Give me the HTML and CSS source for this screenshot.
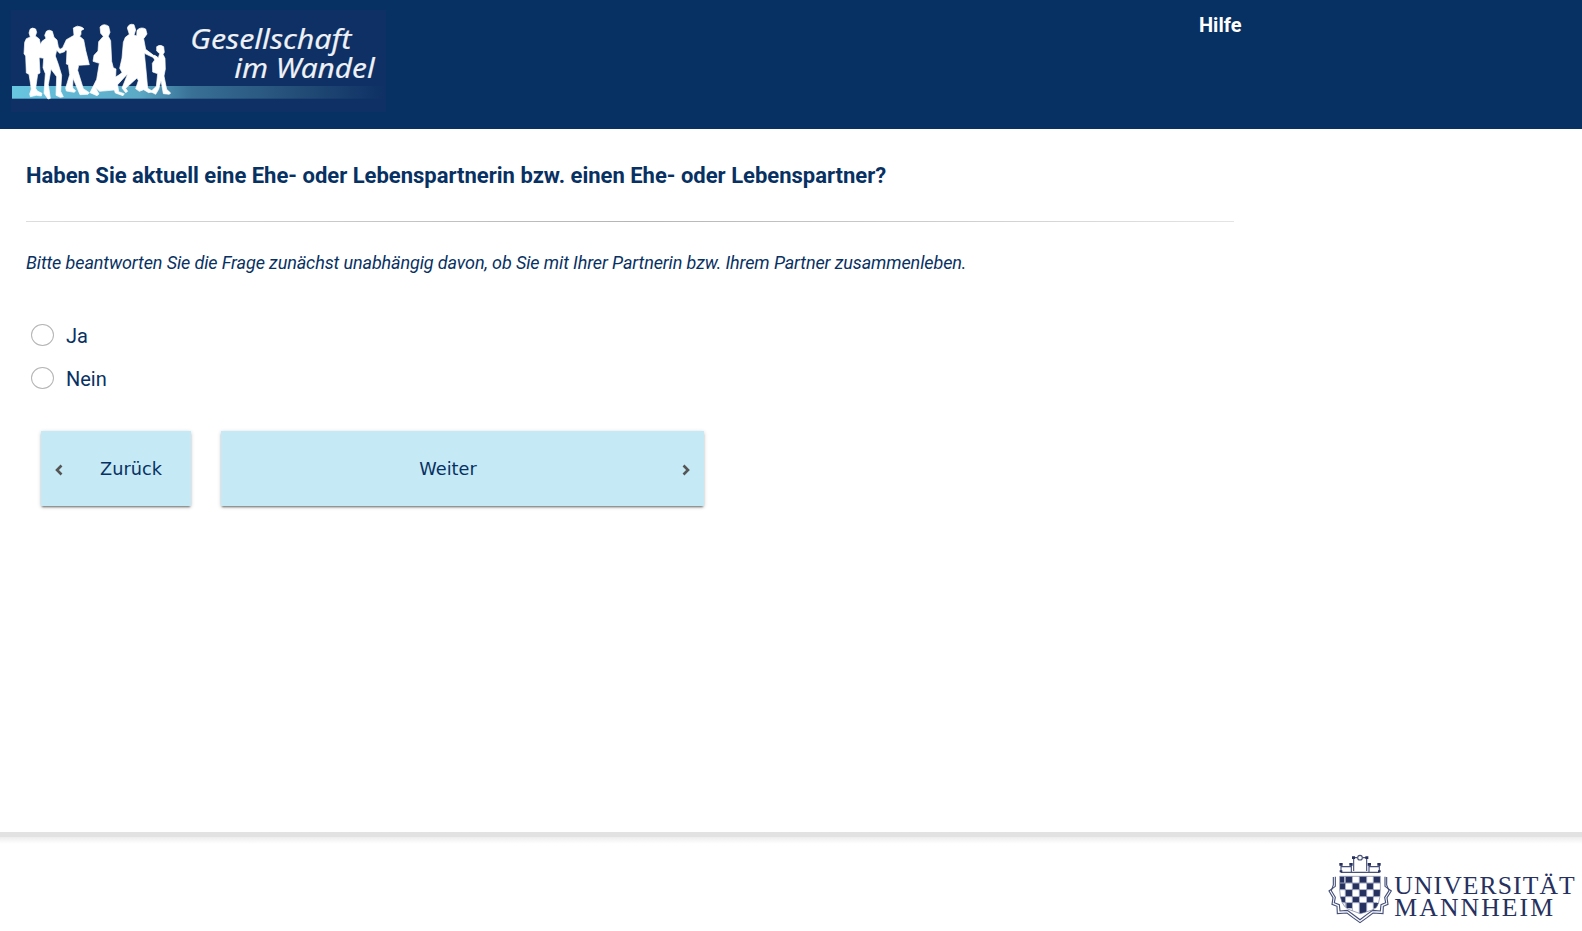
FILE: index.html
```html
<!DOCTYPE html>
<html lang="de">
<head>
<meta charset="utf-8">
<title>Gesellschaft im Wandel</title>
<link rel="stylesheet" href="styles.css">
</head>
<body>
<header class="header">
  <svg class="brand" viewBox="0 0 1200 387" role="img" aria-label="Gesellschaft im Wandel">
    <defs>
      <linearGradient id="band" x1="0" x2="1">
        <stop offset="0" stop-color="#68c6e0"/>
        <stop offset=".34" stop-color="#5ba9c5"/>
        <stop offset=".48" stop-color="#397096"/>
        <stop offset=".75" stop-color="#244f78"/>
        <stop offset="1" stop-color="#0e3064"/>
      </linearGradient>
    </defs>
    <rect x="33" y="30" width="1125" height="306" fill="#0e3064"/>
    <rect x="36" y="258" width="1122" height="38" fill="url(#band)"/>
    <g class="people">
      <path d="M90 88Q97 81 107 87L110 97L106 108L118 117L122 136L128 137L130 150L119 153L117 165L120 219L113 223L107 265L112 273L126 280L124 288L109 286L91 290L89 282L94 267L87 223L79 219L77 168L72 161L74 127L79 116L91 111L87 99Z"/>
      <path d="M139 94Q147 87 157 94L162 112L171 120L175 140L182 152L193 147L194 155L179 160L170 151L166 168L175 193L185 226L182 274L190 290L181 292L168 286L170 230L153 208L145 254L151 295L144 297L132 280L136 221L129 203L131 175L115 172L114 150L126 124L138 115L134 106Z"/>
      <path d="M220 84Q231 74 246 82L252 87L243 92L243 103L239 109L251 119L257 151L268 194L236 196L233 211L250 266L268 278L264 283L240 284L219 235L218 264L227 272L223 277L199 273L197 264L209 224L205 194L199 192L201 151L188 151L179 158L175 151L188 143L199 119L222 106Z"/>
      <path d="M300 81Q311 68 326 79L330 97L325 109L332 122L335 184L340 203L348 207L347 231L360 223L366 217L359 205L366 174L370 127L376 112L388 103L382 84Q387 69 402 74L407 90L402 105L410 108L411 91Q422 79 437 87L441 102L431 116L437 148L461 166L471 171L470 177L463 174L433 160L438 210L443 265L460 275L446 278L431 269L418 274L407 266L415 242L411 234L388 255L377 265L383 274L377 278L366 264L383 222L374 231L353 254L356 275L373 281L369 287L346 279L343 270L299 274L286 262L297 282L291 287L270 278L290 238L298 190L279 184L282 166L294 153L296 125L310 109L302 100Z"/>
      <path d="M470 140Q480 132 491 140L493 157L489 163L495 175L496 207L492 228L500 268L512 279L508 283L490 281L483 242L476 268L467 283L452 275L469 259L473 221L458 216L457 190L464 180L459 170L464 166L475 173L479 161L470 153Z"/>
    </g>
    <g class="brand-text">
      <text x="571" y="148" textLength="483" lengthAdjust="spacingAndGlyphs">Gesellschaft</text>
      <text x="703" y="233" textLength="421" lengthAdjust="spacingAndGlyphs">im Wandel</text>
    </g>
  </svg>
  <a class="help">Hilfe</a>
</header>
<main class="content">
  <h1 class="question">Haben Sie aktuell eine Ehe- oder Lebenspartnerin bzw. einen Ehe- oder Lebenspartner?</h1>
  <div class="rule"></div>
  <p class="hint">Bitte beantworten Sie die Frage zunächst unabhängig davon, ob Sie mit Ihrer Partnerin bzw. Ihrem Partner zusammenleben.</p>
  <div class="answers">
    <label class="answer"><input class="radio" type="radio" name="partner"><span>Ja</span></label>
    <label class="answer"><input class="radio" type="radio" name="partner"><span>Nein</span></label>
  </div>
  <div class="nav">
    <button class="btn back"><svg class="chevron" viewBox="0 0 8 12"><path d="M6.500 1.500L2 6l4.500 4.500"/></svg><span class="label">Zurück</span></button>
    <button class="btn next"><span class="label">Weiter</span><svg class="chevron" viewBox="0 0 8 12"><path d="M1.500 1.500L6 6l-4.500 4.500"/></svg></button>
  </div>
</main>
<footer class="footer">
  <svg class="university" viewBox="0 13 816 273" role="img" aria-label="Universität Mannheim">
    <defs>
      <clipPath id="shield"><path d="M89 128H211V168Q210 220 190 228L151 240L115 227Q90 214 89 168Z"/></clipPath>
    </defs>
    <g class="crest-line">
      <path d="M92 116H209M93 94V115M124 94V115M92 99H124M177 94V115M208 94V115M177 99H208M131 72V112M170 72V112M129 72H142M158 72H172"/>
      <circle cx="150" cy="72" r="7"/>
      <path d="M76 129V158L57 172L69 192L66 212L81 218L82 240L111 238L129 252L150 267L171 252L189 238L219 240L220 218L234 212L231 192L244 172L225 158V129"/>
      <path d="M70 130V154L64 171L76 191L73 207L88 213L90 232L112 230L130 243L150 258L170 243L188 230L211 232L213 213L227 207L224 191L237 171L230 154V130"/>
    </g>
    <g class="crest-fill">
      <path d="M88 88h10v8H88zM118 88h10v8h-10zM173 88h10v8h-10zM202 88h10v8h-10zM126 68h9v8h-9zM166 68h9v8h-9zM89 110h8v6h-8zM204 110h8v6h-8z"/>
      <g clip-path="url(#shield)">
        <path d="M89 128h14v19H89zM107 128h19v19h-19zM149 128h20v19h-20zM191 128h20v19h-20zM88 149h17v18H88zM128 149h19v18h-19zM171 149h18v18h-18zM107 169h19v19h-19zM149 169h20v19h-20zM191 169h20v19h-20zM88 190h17v16H88zM128 190h19v16h-19zM171 190h18v16h-18zM109 208h17v16h-17zM149 208h20v32h-20zM191 208h17v16h-17z"/>
      </g>
    </g>
    <path class="crest-thin" d="M89 128H211V168Q210 220 190 228L151 240L115 227Q90 214 89 168ZM106 128V219M127 128V231M148 128V239M170 128V233M190 128V228M89 148H211M89 168H211M91 189H208M98 207H202"/>
    <g class="university-text">
      <text x="253" y="180" textLength="541">UNIVERSITÄT</text>
      <text x="253" y="247" textLength="476">MANNHEIM</text>
    </g>
  </svg>
</footer>
</body>
</html>
```
FILE: styles.css
```css
* { box-sizing: border-box; }
body {
  margin: 0;
  height: 931px;
  display: flex;
  flex-direction: column;
  overflow: hidden;
  background: #fff;
  color: #083163;
  font-family: Roboto, sans-serif;
}
.header {
  display: flex;
  height: 129px;
  flex: none;
  background: #083163;
}
.brand { width: 400px; height: 129px; }
.people { fill: #fff; stroke: #fff; stroke-width: 2; stroke-linejoin: round; }
.brand-text {
  fill: #eef1f6;
  stroke: #eef1f6;
  stroke-width: .5;
  font: italic 79px "Noto Sans", sans-serif;
}
.help {
  margin: 13px 0 0 799px;
  color: #fff;
  font-size: 20px;
  font-weight: 700;
  line-height: 24px;
}
.content { flex: 1; padding: 33px 26px 0; }
.question {
  margin: 0;
  font-size: 22px;
  font-weight: 700;
  line-height: 27px;
  white-space: nowrap;
}
.rule {
  width: 1208px;
  height: 1px;
  margin-top: 32px;
  background: linear-gradient(90deg, #ddd, #b4b6b6 50%, #e4e4e4);
}
.hint {
  margin: 30px 0 0;
  font-size: 18px;
  font-style: italic;
  letter-spacing: -.11px;
  line-height: 22px;
  white-space: nowrap;
}
.answers {
  display: flex;
  flex-direction: column;
  gap: 21px;
  margin: 50px 0 0 5px;
}
.answer {
  display: flex;
  gap: 12px;
  height: 22px;
  font-size: 20px;
  line-height: 24px;
}
.radio {
  appearance: none;
  width: 23px;
  height: 22px;
  margin: 0;
  border: 1px solid #b5b5b5;
  border-radius: 50%;
  background: #fff;
}
.nav { display: flex; gap: 30px; margin: 42px 0 0 15px; }
.btn {
  display: flex;
  align-items: center;
  height: 75px;
  padding: 0 14px;
  border: 0;
  background: #c5e9f5;
  color: #083163;
  font: 17.7px "DejaVu Sans", sans-serif;
  box-shadow: 0 1px 4px rgba(0, 0, 0, .2), 0 2px 2px -1px rgba(0, 0, 0, .5);
}
.back { width: 150px; }
.next { width: 483px; }
.label { flex: 1; text-align: center; }
.back .label { padding-left: 22px; }
.next .label { padding-right: 21px; }
.chevron {
  width: 8px;
  height: 12px;
  margin-top: 2px;
  fill: none;
  stroke: #555;
  stroke-width: 2.6;
}
.footer {
  display: flex;
  justify-content: flex-end;
  flex: none;
  height: 99px;
  border-top: 5px solid #e2e2e2;
  background: linear-gradient(#ededed, #fff 7px);
}
.university { width: 272px; height: 91px; margin-top: 1px; }
.crest-line { fill: none; stroke: #465079; stroke-width: 3.4; }
.crest-fill { fill: #26315f; }
.crest-thin { fill: none; stroke: #6d769b; stroke-width: 2; }
.university-text { fill: #26315f; font: 77px "Liberation Serif", serif; }
```
